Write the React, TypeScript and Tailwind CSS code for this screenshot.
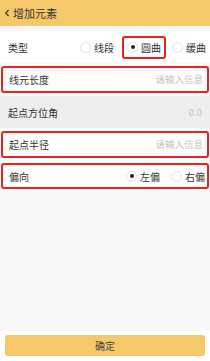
import { ChevronLeft } from "lucide-react";

function Radio({ label, checked }: { label: string; checked?: boolean }) {
  return (
    <span className="flex items-center gap-[3px]">
      <span className="flex size-[11px] items-center justify-center rounded-full border border-[#e2e2e2] bg-white">
        {checked && <span className="size-[4px] rounded-full bg-[#222]" />}
      </span>
      <span className="text-[10px] text-[#333]">{label}</span>
    </span>
  );
}

export default function App() {
  return (
    <div className="flex h-[361px] w-[210px] flex-col bg-[#f7f7f7] font-['Noto_Sans_CJK_SC',sans-serif]">
      <header className="flex h-[26px] items-center gap-[1px] bg-[#f5c96a] pl-[2px]">
        <ChevronLeft size={10} strokeWidth={3} className="text-[#333]" />
        <span className="text-[11px] text-[#333]">增加元素</span>
      </header>

      <div className="mt-[5px] flex flex-col gap-[1px]">
        {/* 类型 */}
        <div className="flex h-[32px] items-center bg-white pl-[8px] pr-[4px]">
          <span className="text-[10px] text-[#333]">类型</span>
          <div className="ml-auto flex items-center">
            <Radio label="线段" />
            <span className="ml-[8px] flex h-[23px] items-center rounded-[3px] border-2 border-[#e8221c] px-[3px]">
              <Radio label="圆曲" checked />
            </span>
            <span className="ml-[6px]">
              <Radio label="缓曲" />
            </span>
          </div>
        </div>

        {/* 线元长度 */}
        <div className="flex h-[31px] items-center bg-white px-[1px] py-[2px]">
          <div className="flex h-full w-full items-center rounded-[3px] border-2 border-[#e8221c] pl-[6px] pr-[4px]">
            <span className="text-[10px] text-[#333]">线元长度</span>
            <span className="ml-auto text-[9.5px] text-[#c2c2c2]">请输入信息</span>
          </div>
        </div>

        {/* 起点方位角 */}
        <div className="flex h-[32px] items-center bg-[#eeeeee] pl-[8px] pr-[8px]">
          <span className="text-[10px] text-[#333]">起点方位角</span>
          <span className="ml-auto text-[9.5px] text-[#c2c2c2]">0.0</span>
        </div>

        {/* 起点半径 */}
        <div className="flex h-[31px] items-center bg-white px-[1px] py-[2px]">
          <div className="flex h-full w-full items-center rounded-[3px] border-2 border-[#e8221c] pl-[6px] pr-[4px]">
            <span className="text-[10px] text-[#333]">起点半径</span>
            <span className="ml-auto text-[9.5px] text-[#c2c2c2]">请输入信息</span>
          </div>
        </div>

        {/* 偏向 */}
        <div className="flex h-[30px] items-center bg-white px-[1px] py-[2px]">
          <div className="flex h-full w-full items-center rounded-[3px] border-2 border-[#e8221c] pl-[6px] pr-[2px]">
            <span className="text-[10px] text-[#333]">偏向</span>
            <div className="ml-auto flex items-center gap-[11px]">
              <Radio label="左偏" checked />
              <Radio label="右偏" />
            </div>
          </div>
        </div>
      </div>

      <div className="mt-auto bg-white px-[5px] pb-[5px] pt-[4px]">
        <button className="flex h-[21px] w-full items-center justify-center rounded-[3px] bg-[#f5c96a] text-[10px] text-[#444]">
          确定
        </button>
      </div>
    </div>
  );
}
